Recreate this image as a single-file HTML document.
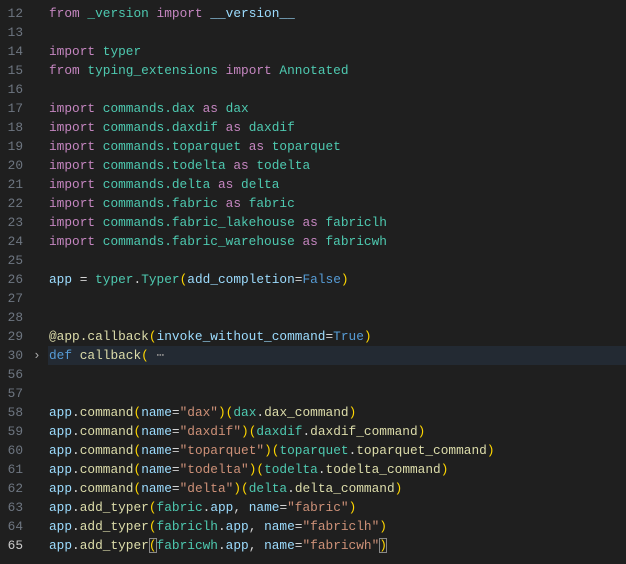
<!DOCTYPE html>
<html><head><meta charset="utf-8"><style>
body{margin:0;width:626px;height:564px;background:#1f1f1f;overflow:hidden;font-family:"Liberation Mono",monospace;font-size:12.8px}
.r{position:absolute;left:0;width:626px;height:19px;line-height:19px;white-space:pre}
.n{position:absolute;left:0;width:23px;text-align:right;color:#6e7681}
.c{position:absolute;left:49px;color:#d4d4d4}
.k{color:#c586c0}.m{color:#4ec9b0}.v{color:#9cdcfe}.f{color:#dcdcaa}.s{color:#ce9178}.p{color:#ffd700}.b{color:#569cd6}.o{color:#d4d4d4}
.hl{position:absolute;left:48px;right:0;top:0;bottom:0;background:#232a33}
.bx{outline:1px solid #888;outline-offset:-1px}
</style></head><body>
<div class="r" style="top:4px"><span class="n">12</span><span class="c"><span class="k">from</span> <span class="m">_version</span> <span class="k">import</span> <span class="v">__version__</span></span></div>
<div class="r" style="top:23px"><span class="n">13</span></div>
<div class="r" style="top:42px"><span class="n">14</span><span class="c"><span class="k">import</span> <span class="m">typer</span></span></div>
<div class="r" style="top:61px"><span class="n">15</span><span class="c"><span class="k">from</span> <span class="m">typing_extensions</span> <span class="k">import</span> <span class="m">Annotated</span></span></div>
<div class="r" style="top:80px"><span class="n">16</span></div>
<div class="r" style="top:99px"><span class="n">17</span><span class="c"><span class="k">import</span> <span class="m">commands.dax</span> <span class="k">as</span> <span class="m">dax</span></span></div>
<div class="r" style="top:118px"><span class="n">18</span><span class="c"><span class="k">import</span> <span class="m">commands.daxdif</span> <span class="k">as</span> <span class="m">daxdif</span></span></div>
<div class="r" style="top:137px"><span class="n">19</span><span class="c"><span class="k">import</span> <span class="m">commands.toparquet</span> <span class="k">as</span> <span class="m">toparquet</span></span></div>
<div class="r" style="top:156px"><span class="n">20</span><span class="c"><span class="k">import</span> <span class="m">commands.todelta</span> <span class="k">as</span> <span class="m">todelta</span></span></div>
<div class="r" style="top:175px"><span class="n">21</span><span class="c"><span class="k">import</span> <span class="m">commands.delta</span> <span class="k">as</span> <span class="m">delta</span></span></div>
<div class="r" style="top:194px"><span class="n">22</span><span class="c"><span class="k">import</span> <span class="m">commands.fabric</span> <span class="k">as</span> <span class="m">fabric</span></span></div>
<div class="r" style="top:213px"><span class="n">23</span><span class="c"><span class="k">import</span> <span class="m">commands.fabric_lakehouse</span> <span class="k">as</span> <span class="m">fabriclh</span></span></div>
<div class="r" style="top:232px"><span class="n">24</span><span class="c"><span class="k">import</span> <span class="m">commands.fabric_warehouse</span> <span class="k">as</span> <span class="m">fabricwh</span></span></div>
<div class="r" style="top:251px"><span class="n">25</span></div>
<div class="r" style="top:270px"><span class="n">26</span><span class="c"><span class="v">app</span> = <span class="m">typer</span>.<span class="m">Typer</span><span class="p">(</span><span class="v">add_completion</span>=<span class="b">False</span><span class="p">)</span></span></div>
<div class="r" style="top:289px"><span class="n">27</span></div>
<div class="r" style="top:308px"><span class="n">28</span></div>
<div class="r" style="top:327px"><span class="n">29</span><span class="c"><span class="f">@app.callback</span><span class="p">(</span><span class="v">invoke_without_command</span>=<span class="b">True</span><span class="p">)</span></span></div>
<div class="r" style="top:346px"><div class="hl"></div><span class="n">30</span><span style="position:absolute;left:33px;color:#aaa">&#x203A;</span><span class="c"><span class="b">def</span> <span class="f">callback</span><span class="p">(</span><span style="color:#888"> ⋯</span></span></div>
<div class="r" style="top:365px"><span class="n">56</span></div>
<div class="r" style="top:384px"><span class="n">57</span></div>
<div class="r" style="top:403px"><span class="n">58</span><span class="c"><span class="v">app</span>.<span class="f">command</span><span class="p">(</span><span class="v">name</span>=<span class="s">"dax"</span><span class="p">)(</span><span class="m">dax</span>.<span class="f">dax_command</span><span class="p">)</span></span></div>
<div class="r" style="top:422px"><span class="n">59</span><span class="c"><span class="v">app</span>.<span class="f">command</span><span class="p">(</span><span class="v">name</span>=<span class="s">"daxdif"</span><span class="p">)(</span><span class="m">daxdif</span>.<span class="f">daxdif_command</span><span class="p">)</span></span></div>
<div class="r" style="top:441px"><span class="n">60</span><span class="c"><span class="v">app</span>.<span class="f">command</span><span class="p">(</span><span class="v">name</span>=<span class="s">"toparquet"</span><span class="p">)(</span><span class="m">toparquet</span>.<span class="f">toparquet_command</span><span class="p">)</span></span></div>
<div class="r" style="top:460px"><span class="n">61</span><span class="c"><span class="v">app</span>.<span class="f">command</span><span class="p">(</span><span class="v">name</span>=<span class="s">"todelta"</span><span class="p">)(</span><span class="m">todelta</span>.<span class="f">todelta_command</span><span class="p">)</span></span></div>
<div class="r" style="top:479px"><span class="n">62</span><span class="c"><span class="v">app</span>.<span class="f">command</span><span class="p">(</span><span class="v">name</span>=<span class="s">"delta"</span><span class="p">)(</span><span class="m">delta</span>.<span class="f">delta_command</span><span class="p">)</span></span></div>
<div class="r" style="top:498px"><span class="n">63</span><span class="c"><span class="v">app</span>.<span class="f">add_typer</span><span class="p">(</span><span class="m">fabric</span>.<span class="v">app</span>, <span class="v">name</span>=<span class="s">"fabric"</span><span class="p">)</span></span></div>
<div class="r" style="top:517px"><span class="n">64</span><span class="c"><span class="v">app</span>.<span class="f">add_typer</span><span class="p">(</span><span class="m">fabriclh</span>.<span class="v">app</span>, <span class="v">name</span>=<span class="s">"fabriclh"</span><span class="p">)</span></span></div>
<div class="r" style="top:536px"><span class="n" style="color:#cccccc">65</span><span class="c"><span class="v">app</span>.<span class="f">add_typer</span><span class="p bx">(</span><span class="m">fabricwh</span>.<span class="v">app</span>, <span class="v">name</span>=<span class="s">"fabricwh"</span><span class="p bx">)</span></span></div>
</body></html>
